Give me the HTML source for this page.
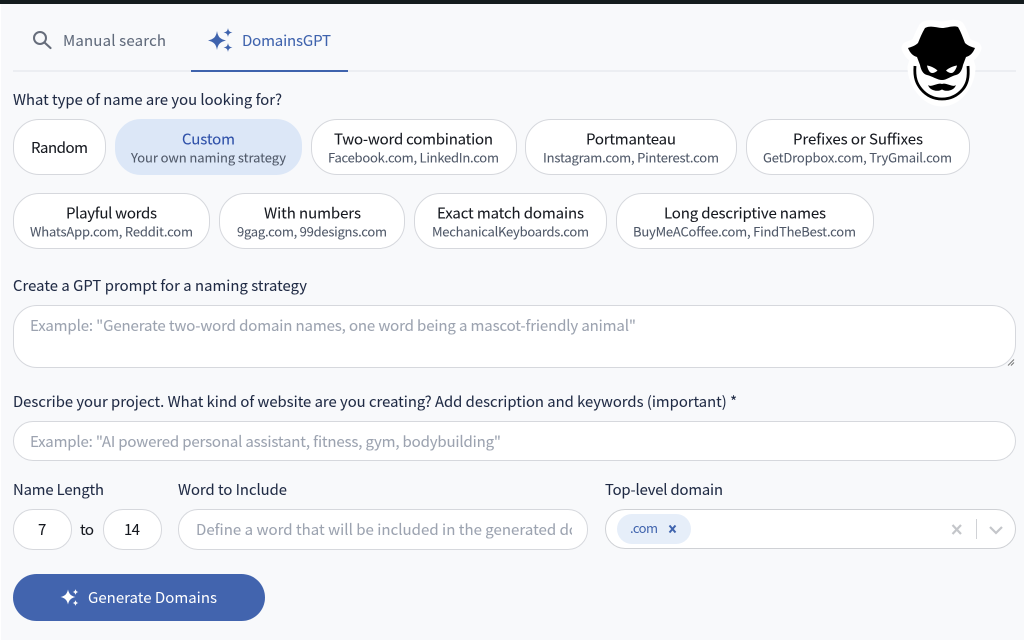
<!DOCTYPE html>
<html lang="en"><head><meta charset="utf-8"><title>DomainsGPT</title>
<style>
html,body{margin:0;padding:0;width:1024px;height:640px;overflow:hidden;background:#f8f9fb}
body{position:relative}
.b{position:absolute;box-sizing:border-box;background:#fff;border:1.2px solid #d6d8dd}
svg{position:absolute;left:0;top:0}
text{font-family:"Noto Sans CJK JP","Liberation Sans",sans-serif;stroke-width:.06px}
.l{font-size:14.8px;fill:#1f2a44;stroke:#1f2a44}
.t{font-size:15px;fill:#15181f;stroke:#15181f}
.s{font-size:13px;fill:#4f5868;stroke:#4f5868}
.p{font-size:15px;fill:#9ca3b0;stroke:#9ca3b0}
</style></head><body>
<div style="position:absolute;left:0;top:0;width:1024px;height:4px;background:#141c1e"></div>
<div style="position:absolute;left:0;top:4px;width:1px;height:636px;background:#fff"></div>
<div style="position:absolute;left:13px;top:70px;width:1003px;height:2px;background:#eceef2"></div>
<div style="position:absolute;left:191px;top:70px;width:157px;height:2px;background:#3f63ad"></div>

<div class="b" style="left:13px;top:119px;width:93px;height:56px;border-radius:26px"></div>
<div class="b" style="left:115px;top:119px;width:187px;height:56px;border-radius:26px;background:#dce7f7;border-color:#dce7f7"></div>
<div class="b" style="left:311px;top:119px;width:206px;height:56px;border-radius:26px"></div>
<div class="b" style="left:525px;top:119px;width:212px;height:56px;border-radius:26px"></div>
<div class="b" style="left:746px;top:119px;width:224px;height:56px;border-radius:26px"></div>
<div class="b" style="left:13px;top:193px;width:197px;height:56px;border-radius:26px"></div>
<div class="b" style="left:219px;top:193px;width:186px;height:56px;border-radius:26px"></div>
<div class="b" style="left:414px;top:193px;width:193px;height:56px;border-radius:26px"></div>
<div class="b" style="left:616px;top:193px;width:258px;height:56px;border-radius:26px"></div>

<div class="b" style="left:13px;top:305px;width:1003px;height:63px;border-radius:24px"></div>
<div class="b" style="left:13px;top:421px;width:1003px;height:40px;border-radius:20px"></div>
<div class="b" style="left:13px;top:509px;width:59px;height:41px;border-radius:20px"></div>
<div class="b" style="left:103px;top:509px;width:59px;height:41px;border-radius:20px"></div>
<div class="b" style="left:178px;top:509px;width:410px;height:41px;border-radius:20px"></div>
<div class="b" style="left:605px;top:509px;width:411px;height:40px;border-radius:20px;border-color:#cfd1d5"></div>
<div style="position:absolute;left:617px;top:514px;width:74px;height:30px;border-radius:15px;background:#e6eef9"></div>
<div style="position:absolute;left:13px;top:574px;width:252px;height:47px;border-radius:24px;background:#4264ae"></div>

<svg width="1024" height="640" viewBox="0 0 1024 640">
<defs><clipPath id="c"><rect x="190" y="515" width="382" height="30"/></clipPath></defs>

<circle cx="40" cy="38" r="6" fill="none" stroke="#666d7b" stroke-width="2"/>
<path d="M44.500 42.500L50.500 48" fill="none" stroke="#666d7b" stroke-width="2.200" stroke-linecap="round"/>
<g fill="#3f63ad">
<path d="M217 31C218 37 220 39 226 40.500C220 42 218 44 217 50C216 44 214 42 208 40.500C214 39 216 37 217 31Z"/>
<path d="M228 28C228.500 31 229.500 32 232.500 32.500C229.500 33 228.500 34 228 37C227.500 34 226.500 33 223.500 32.500C226.500 32 227.500 31 228 28Z"/>
<path d="M228 43C228.500 46 229.500 47 232.500 47.500C229.500 48 228.500 49 228 52C227.500 49 226.500 48 223.500 47.500C226.500 47 227.500 46 228 43Z"/>
</g>
<text x="63" y="46" font-size="15" fill="#606a7b" stroke="#606a7b" textLength="103">Manual search</text>
<text x="242" y="46" font-size="15" fill="#3f63ad" stroke="#3f63ad" textLength="89">DomainsGPT</text>

<text class="l" x="13" y="105" textLength="269">What type of name are you looking for?</text>

<text class="t" x="31" y="153" textLength="57">Random</text>
<text class="t" x="182" y="144.500" textLength="53" style="fill:#2d4fa8;stroke:#2d4fa8">Custom</text>
<text class="s" x="131" y="162.500" textLength="155">Your own naming strategy</text>
<text class="t" x="334" y="144.500" textLength="159">Two-word combination</text>
<text class="s" x="328" y="162.500" textLength="171">Facebook.com, LinkedIn.com</text>
<text class="t" x="586" y="144.500" textLength="90">Portmanteau</text>
<text class="s" x="543" y="162.500" textLength="176">Instagram.com, Pinterest.com</text>
<text class="t" x="793" y="144.500" textLength="130">Prefixes or Suffixes</text>
<text class="s" x="763" y="162.500" textLength="189">GetDropbox.com, TryGmail.com</text>

<text class="t" x="66" y="218.500" textLength="91">Playful words</text>
<text class="s" x="30" y="236.500" textLength="163">WhatsApp.com, Reddit.com</text>
<text class="t" x="264" y="218.500" textLength="97">With numbers</text>
<text class="s" x="237" y="236.500" textLength="150">9gag.com, 99designs.com</text>
<text class="t" x="437" y="218.500" textLength="147">Exact match domains</text>
<text class="s" x="432" y="236.500" textLength="157">MechanicalKeyboards.com</text>
<text class="t" x="664" y="218.500" textLength="162">Long descriptive names</text>
<text class="s" x="633" y="236.500" textLength="223">BuyMeACoffee.com, FindTheBest.com</text>

<text class="l" x="13" y="291" textLength="294">Create a GPT prompt for a naming strategy</text>
<text class="p" x="30" y="331" textLength="606">Example: "Generate two-word domain names, one word being a mascot-friendly animal"</text>
<path d="M1008 365.500L1014 359.500M1011 365.500L1014 362.500" stroke="#777" stroke-width="1" fill="none"/>

<text class="l" x="13" y="407" textLength="724">Describe your project. What kind of website are you creating? Add description and keywords (important) *</text>
<text class="p" x="30" y="447" textLength="471">Example: "AI powered personal assistant, fitness, gym, bodybuilding"</text>

<text class="l" x="13" y="495" textLength="91">Name Length</text>
<text class="l" x="178" y="495" textLength="109">Word to Include</text>
<text class="l" x="605" y="495" textLength="118">Top-level domain</text>

<text class="t" x="38" y="535" textLength="8">7</text>
<text class="t" x="80" y="535" textLength="14">to</text>
<text class="t" x="124" y="535" textLength="16">14</text>
<text class="p" x="196" y="535" textLength="382" clip-path="url(#c)">Define a word that will be included in the generated do</text>

<text x="630" y="533" font-size="13" fill="#3f63ad" textLength="28">.com</text>
<path d="M669.500 525.500L675.500 532.500M675.500 525.500L669.500 532.500" stroke="#3f63ad" stroke-width="2" fill="none"/>
<path d="M952.500 525L961 534M961 525L952.500 534" stroke="#c4c6ca" stroke-width="2.200" fill="none"/>
<rect x="976" y="519" width="1" height="20" fill="#d0d2d6"/>
<path d="M990 527L996 533L1002 527" stroke="#c4c6ca" stroke-width="2.200" fill="none"/>

<g fill="#fff">
<path d="M68 589.500C69 594 71 596 75.500 597C71 598 69 600 68 604.500C67 600 65 598 60.500 597C65 596 67 594 68 589.500Z"/>
<path d="M75.500 589C76 591 76.700 591.700 78.500 592C76.700 592.300 76 593 75.500 595C75 593 74.300 592.300 72.500 592C74.300 591.700 75 591 75.500 589Z"/>
<path d="M75.500 600C76 602 76.700 602.700 78.500 603C76.700 603.300 76 604 75.500 606C75 604 74.300 603.300 72.500 603C74.300 602.700 75 602 75.500 600Z"/>
</g>
<text x="88" y="603" font-size="15" fill="#fff" textLength="129">Generate Domains</text>

<path fill="#fff" stroke="#fff" stroke-width="13" stroke-linejoin="round" d="M925 28C931 25 937 28 942 28C947 28 953 25 958 27C961 32 963 38 965 43C968 46 972 47 975 48C973 53 970 56 966 57L969 67C969 82 958 100 942 100C926 100 914 82 914 67L917 57C913 56 910 53 908 48C911 47 915 46 918 43C920 38 922 33 925 28Z"/>
<path fill="#000" d="M925 28C931 25 937 28 942 28C947 28 953 25 958 27C961 32 963 38 965 43C968 46 972 47 975 48C973 53 970 56 966 57L963 65C962 70 960 74 956 75C951 76 947 80 942 80C937 80 932 76 927 75C923 74 921 70 920 65L917 57C913 56 910 53 908 48C911 47 915 46 918 43C920 38 922 33 925 28Z"/>
<path d="M915 66C914 78 917 84 921 89C926 95 933 99 942 99C951 99 958 95 963 89C967 84 969 78 968 66" fill="none" stroke="#000" stroke-width="2.800"/>
<path d="M928 85C931 88 938 82 942 84C946 82 953 88 956 85C954 91 946 92 942 89.500C938 92 930 91 928 85Z" fill="#000"/>
<path fill="#fff" d="M927 65.500C930.500 66 935 68 937.500 70.500C935 73 932 73.500 930.500 72.500C928.500 71 927.500 68 927 65.500ZM957 65.500C953.500 66 948.500 68 946 70.500C948.500 73 951.500 73.500 953 72.500C955 71 956.500 68 957 65.500Z"/>
</svg>
</body></html>
